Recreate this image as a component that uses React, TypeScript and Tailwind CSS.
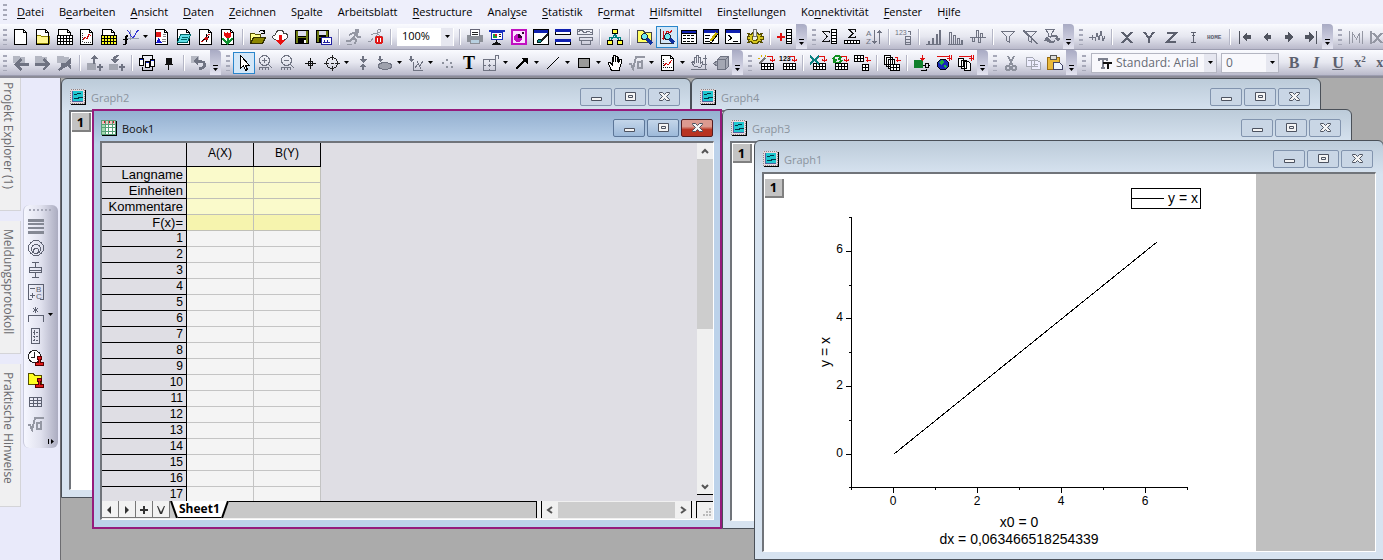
import type { ReactNode } from "react";
import clsx from "clsx";

const GREY = "#6f7382";

function Doc({ children, fill = "#fff" }: { children?: ReactNode; fill?: string }) {
  return (
    <>
      <path d="M1.5 .5h9l3 3v12h-12z" fill={fill} stroke="#000" />
      <path d="M10.5 .5v3h3" fill="none" stroke="#000" />
      {children}
    </>
  );
}

function Grid({ x, y, w, h, fill = "#fff", stroke = "#000" }: { x: number; y: number; w: number; h: number; fill?: string; stroke?: string }) {
  const cols = Math.floor(w / 3);
  const rows = Math.floor(h / 3);
  return (
    <g fill="none" stroke={stroke}>
      <rect x={x + 0.5} y={y + 0.5} width={w} height={h} fill={fill} />
      {Array.from({ length: cols }, (_, i) => (
        <path key={i} d={`M${x + 0.5 + i * 3} ${y}v${h + 1}`} />
      ))}
      {Array.from({ length: rows }, (_, i) => (
        <path key={i} d={`M${x} ${y + 0.5 + i * 3}h${w + 1}`} />
      ))}
    </g>
  );
}

const redArrow = <path d="M9 1.500h5.500v5M12.500 4.500l2 2 2-2M12 5.500h5" fill="none" stroke="#e01010" />;

const icons: Record<string, ReactNode> = {
  neu: <Doc />,
  ordner: (
    <Doc>
      <path d="M1.500 14.500v-8h4l1 1h8v7z" fill="#fff68f" stroke="#8c8200" />
      <path d="M1.500 4v11.500h12V4" fill="none" stroke="#000" />
    </Doc>
  ),
  arbeitsmappe: (
    <Doc>
      <Grid x={0} y={6} w={15} h={9} />
    </Doc>
  ),
  diagramm: (
    <Doc>
      <path d="M3.500 4v9h9" fill="none" stroke="#333" strokeDasharray="1 1" />
      <path d="M4 11l2-3 2 2 2-5 2 2" fill="none" stroke="#d01010" />
    </Doc>
  ),
  matrix: (
    <Doc>
      <Grid x={0} y={6} w={15} h={9} fill="#ffff20" />
    </Doc>
  ),
  funktion: (
    <>
      <path d="M7.500 1v10M3 9.500h13" stroke="#9aa0b0" />
      <path d="M4 1.500c3 0 3 7 5.500 7S13 2 15.500 1" fill="none" stroke="#3030d0" />
      <path d="M5 7c-2-1-2 1-2 2v5c0 1-1 2-3 1.500M0 10.500h5" fill="none" stroke="#000" strokeWidth="1.500" />
    </>
  ),
  layout: (
    <Doc>
      <path d="M2 3h5v5H2z" fill="#e01818" />
      <path d="M9 5.500h3M9 7.500h3M8 12.500h4M8 10.500h4" stroke="#888" />
      <path d="M2 14l2.500-5L8 14z" fill="#1818d0" />
    </Doc>
  ),
  notizen: (
    <Doc>
      <path d="M4.500 5.500h10l-3 8h-10z" fill="#60e0e8" stroke="#066" />
      <path d="M5.500 8.500h6M4.500 10.500h6" stroke="#066" />
    </Doc>
  ),
  digitalisieren: (
    <Doc>
      <path d="M3 13C7 12 7 6 12 5" fill="none" stroke="#d01010" />
      <path d="M4.500 11.500l7-4M8 5v8" stroke="#000" />
      <path d="M6.500 8h3v3h-3z" fill="#d01010" />
    </Doc>
  ),
  bild: (
    <Doc>
      <path d="M4 3l2 1.500L7.500 3 9 4.500 11 3v4L9 9H6L4 7z" fill="#e81010" />
      <path d="M7.500 9v5M2.500 9.500l5 5 5-5" fill="none" stroke="#109030" strokeWidth="2" />
    </Doc>
  ),
  oeffnen: (
    <>
      <path d="M.5 14.500v-10h4l1 1h5v3" fill="#ffff90" stroke="#555000" />
      <path d="M.5 14.500l3-6h12l-3 6z" fill="#8c8600" stroke="#333000" />
      <path d="M9 3c2-3 4-2 5 0m0-2v3h-3" fill="none" stroke="#000" />
    </>
  ),
  cloud: (
    <>
      <path d="M4 10.500C-.5 10.500 0 5.500 3.500 6 4 0 11 .5 11.500 4 17 4 16.500 10.500 12 10.500" fill="#fff" stroke="#444" />
      <path d="M7 6h3v5h3l-4.500 5L4 11h3z" fill="#e81010" />
    </>
  ),
  speichern: (
    <>
      <path d="M1 1h14v14H1z" />
      <path d="M2 2h2v12H2zM12 2h2v12h-2zM4 8h8v1H4z" fill="#6c7a10" />
      <path d="M4 2h8v5H4z" fill="#dde" />
      <path d="M10 11h2v3h-2z" fill="#fff" />
    </>
  ),
  speichernVorlage: (
    <>
      <path d="M0 1h13v13H0z" />
      <path d="M1 2h2v11H1zM10 2h2v11h-2zM3 8h7v1H3z" fill="#6c7a10" />
      <path d="M3 2h7v4H3z" fill="#dde" />
      <path d="M5.500 8.500h10v7h-10z" fill="#fff" stroke="#2020a0" />
      <path d="M7 13.500h7M8.500 11v2M11.500 11v2" stroke="#2020a0" />
    </>
  ),
  laufen: (
    <g fill="none" stroke="#9497a3" strokeWidth="2">
      <circle cx="11" cy="2" r="1.200" />
      <path d="M3 6l4-2 3 1-3 4 3 2-1 4M7 9l-3 3H0M10 5l2 3h3" />
      <path d="M1 15.500h5" strokeWidth="1" />
    </g>
  ),
  stopp: (
    <>
      <g fill="none" stroke="#9497a3">
        <circle cx="11" cy="2" r="1.500" />
        <path d="M3 6l4-2 3 1-3 4M5 9l-2 3H0M10 5l2 2h3" />
      </g>
      <circle cx="11" cy="11" r="4.500" fill="#e01818" />
      <path d="M9.500 9v4M12.500 9v4" stroke="#fff" />
    </>
  ),
  drucken: (
    <>
      <path d="M0 6h16v7H0z" fill="#8c9098" />
      <path d="M4 1h8v6H4zM3 10h10v5H3z" fill="#fff" />
      <path d="M3.500 7V.5h9V7" fill="none" stroke="#667" />
      <path d="M5 3.500h6M5 5.500h6" stroke="#222" />
      <path d="M3.500 10.500h9v4h-9z" fill="#b8d0e0" stroke="#8c9098" />
    </>
  ),
  praesentation: (
    <>
      <path d="M0 1h16v2H0z" fill="#1830c0" />
      <path d="M2.500 3.500h11v7h-11z" fill="#fff" stroke="#1830c0" />
      <circle cx="6" cy="7" r="2.500" fill="#18a040" />
      <path d="M6 4.500A2.500 2.500 0 018.500 7H6z" fill="#e02020" />
      <path d="M10 5.500h2M10 7.500h2" stroke="#222" />
      <path d="M7.500 11v2M4 15.500l3.500-3 3.500 3z" stroke="#111" fill="#111" />
    </>
  ),
  video: (
    <>
      <path d="M0 0h16v16H0z" fill="#c010c0" />
      <path d="M2 2h12v12H2z" fill="#fbe0ff" />
      <circle cx="7" cy="9" r="4" fill="#c010c0" />
      <path d="M7 9V5a4 4 0 014 4zM11 3h2v2h-2z" fill="#300030" />
    </>
  ),
  farbe: (
    <>
      <path d="M.5 .5h15v15H.5z" fill="#fff" stroke="#000" />
      <path d="M1 1h14v3H1z" fill="#1020b0" />
      <path d="M15 4L8 10l1 2 6-5z" fill="#222" />
      <path d="M4 14c0-3 2-4 4-3s0 3-4 3z" fill="#108888" stroke="#022" />
    </>
  ),
  teilen: (
    <>
      <path d="M.5 .5h15v5H.5zM.5 10.500h15v5H.5z" fill="#fff" stroke="#000" />
      <path d="M0 0h16v3H0zM0 10h16v3H0z" fill="#1020b0" />
    </>
  ),
  zusammen: (
    <g fill="none" stroke={GREY}>
      <path d="M.5 .5h15v5H.5zM2.500 8.500h13v3h-13zM4.500 11.500h9v4h-9zM1 3l3-2 4 3 3-2 4 2" />
    </g>
  ),
  hierarchie: (
    <>
      <path d="M8 5v3M2.500 11V8.500h11V11M8 5l-4 6M8 5l4 6" fill="none" stroke="#008080" />
      <path d="M5.500 .5h5v4h-5z" fill="#ffff40" stroke="#000" />
      <path d="M.5 11.500h5v4h-5zM10.500 11.500h5v4h-5z" fill="#ffff40" stroke="#000" />
    </>
  ),
  explorer: (
    <>
      <path d="M.5 13.500V1.500h6l1 2h7v10z" fill="#ffff60" stroke="#444" />
      <circle cx="7.500" cy="7.500" r="3" fill="#70e8f0" stroke="#223" />
      <path d="M10 10l5 5" stroke="#1030a0" strokeWidth="3" />
    </>
  ),
  objektmanager: (
    <>
      <path d="M1.500 0v14.500H15" fill="none" stroke="#333" />
      <path d="M4.500 2v9M3 10l3-3 2-5 3 2 2-3" fill="none" stroke="#d01010" />
      <circle cx="8.500" cy="7.500" r="3" fill="#70e8f0" stroke="#223" />
      <path d="M11 10l4 4" stroke="#1030a0" strokeWidth="3" />
    </>
  ),
  liste: (
    <>
      <path d="M0 1h16v14H0z" />
      <path d="M1 2h14v2H1z" fill="#1020b0" />
      <path d="M1 5h14v9H1z" fill="#fff" />
      <path d="M2 6.500h12M2 9.500h12M2 12.500h12" stroke="#000" strokeDasharray="3 1" />
    </>
  ),
  notiz: (
    <>
      <path d="M.5 .5h15v14H.5z" fill="#fff" stroke="#000" />
      <path d="M1 1h14v3H1z" fill="#1020b0" />
      <path d="M2 6.500h5M2 9.500h4M2 12.500h5" stroke="#000" />
      <path d="M14 4l-6 8" stroke="#c8b000" strokeWidth="3" />
      <path d="M15 5l-6 8H7" stroke="#000" fill="none" />
    </>
  ),
  befehl: (
    <>
      <path d="M.5 .5h15v14H.5z" fill="#fff" stroke="#000" />
      <path d="M1 1h14v3H1z" fill="#1020b0" />
      <path d="M3 6l4 3-4 3M8 12.500h5" fill="none" stroke="#000" />
    </>
  ),
  zahnrad: (
    <>
      <path d="M0 7.500h2l-1-3 3 1 2-2h4l2 2 3-1-1 3h2v3h-2l1 3-3-1-2 2H6l-2-2-3 1 1-3H0z" fill="#d8c820" stroke="#554c00" />
      <circle cx="8" cy="9" r="2.500" fill="#eee" stroke="#665c00" />
      <path d="M6.500 .5h3v7h-3z" fill="#eee" stroke="#777" />
    </>
  ),
  spalteNeu: (
    <>
      <path d="M0 8h8M4 4v8" stroke="#e01010" strokeWidth="2" />
      <path d="M9.500 .5h5v14h-5zM9 3.500h6M9 6.500h6M9 9.500h6M9 12.500h6" fill="#fff" stroke="#000" />
    </>
  ),
  summeSpalte: (
    <>
      <path d="M7 4V2.500H1l4 5-4 5h6V11" fill="none" stroke="#111" />
      <path d="M9.500 .5h5v14h-5zM9 3.500h6M9 6.500h6M9 9.500h6M9 12.500h6" fill="#fff" stroke="#000" />
    </>
  ),
  summeZeile: (
    <>
      <path d="M11 3V.5H5l4 4-4 4h6.500V7" fill="none" stroke="#111" />
      <path d="M.5 11.500h15v3H.5zM3.500 11v4M6.500 11v4M9.500 11v4M12.500 11v4" fill="#fff" stroke="#000" />
    </>
  ),
  sortieren: (
    <g stroke={GREY} fill="none">
      <text x="0" y="7" fontSize="8" stroke="none" fill={GREY}>A</text>
      <text x="0" y="15" fontSize="8" stroke="none" fill={GREY}>Z</text>
      <path d="M8.500 1v13M6.500 12l2 2 2-2M13.500 15V2M11.500 4l2-2 2 2" />
    </g>
  ),
  werte: (
    <g stroke={GREY} fill="none">
      <text x="-1" y="6" fontSize="7" stroke="none" fill={GREY}>123</text>
      <path d="M12 2.500h2v3M9.500 7.500h5v8h-5zM9 10.500h6M9 13.500h6" />
    </g>
  ),
  balken1: <path d="M0 15.500h15M2.500 15v-3h1v3M6.500 15V9h1v6M10.500 15V5h1v10M13.500 15V1h1v14" fill="none" stroke={GREY} />,
  balken2: <path d="M0 15.500h15M1.500 15V3h2v12M5.500 15V6h2v9M9.500 15V9h2v6M13.500 15v-4h1v4" fill="none" stroke={GREY} />,
  balken3: <path d="M0 8.500h16M2.500 8v4h2V8M6.500 8V1h2v12h2V4h2v4" fill="none" stroke={GREY} />,
  filter: <path d="M1.500 2.500h13l-5 5v6l-3-2v-4z" fill="none" stroke={GREY} />,
  filterAus: <path d="M1.500 2.500h13l-5 5v6l-3-2v-4zM1 1l14 14M2 1l14 14" fill="none" stroke={GREY} />,
  filterNeu: (
    <g fill="none" stroke={GREY}>
      <path d="M1.500 .5h9l-3 4v3h-3v-3z" />
      <path d="M3 9c0 4 4 5 8 3M14 10c-1-4-5-4-8-2" strokeWidth="2" />
      <path d="M1 11l2-3 3 3zM11 9h5l-2 3z" fill={GREY} />
    </g>
  ),
  welle: <path d="M0 8.500h6M3.500 6v5M6 12l2-8 2 7 2-9 2 10 2-5" fill="none" stroke={GREY} />,
  xAchse: <path d="M3 3l10 11M13 3L3 14" fill="none" stroke="#5c606e" strokeWidth="2" />,
  yAchse: <path d="M3 3l5 6 5-6M8 8v6" fill="none" stroke="#5c606e" strokeWidth="2" />,
  zAchse: <path d="M4 4h9L4 13h9" fill="none" stroke="#5c606e" strokeWidth="2" />,
  fehler: <path d="M8.500 3v10M6 3.500h5M6 13.500h5M7 6.500h3" fill="none" stroke="#5c606e" />,
  home: <text x="0" y="10" fontSize="6" fontWeight="bold" fontFamily="Liberation Mono, monospace" fill="#5c606e">HOME</text>,
  erster: <path d="M2 2h1v13H2zM5 8l5-5v3h4v4h-4v3z" fill="#50545f" />,
  zurueck: <path d="M4 8l5-5v3h3v4H9v3z" fill="#50545f" />,
  weiter: <path d="M12 8L7 3v3H4v4h3v3z" fill="#50545f" />,
  letzter: <path d="M13 2h1v13h-1zM11 8L6 3v3H2v4h4v3z" fill="#50545f" />,
  maske: <path d="M1.500 2v13M14.500 2v13M4.500 14V4l4 6 3-6v10" fill="none" stroke="#9497a3" />,
  maskeX: <path d="M.5 2v13M3 4l9 10M12 4L3 14" fill="none" stroke="#9497a3" strokeWidth="2" />,

  links: (
    <>
      <path d="M0 1h6l1 1h5v6H0z" fill="#b4b7c2" />
      <path d="M1 9l6-6 2 2-3 3h10v3H6l3 3-2 2z" fill={GREY} />
    </>
  ),
  rechts: (
    <>
      <path d="M0 1h6l1 1h5v6H0z" fill="#b4b7c2" />
      <path d="M15 9L9 3 7 5l3 3H0v3h10l-3 3 2 2z" fill={GREY} />
    </>
  ),
  hoch: (
    <>
      <path d="M0 1h6l1 1h5v6H0z" fill="#b4b7c2" />
      <path d="M4 8h6V6h4v3L4 15H0l4-4zM9 10h5v5z" fill={GREY} />
      <path d="M14 4L2 15" stroke={GREY} strokeWidth="2" />
    </>
  ),
  ordnerPlus: (
    <>
      <path d="M0 8h9v7H0z" fill="#a4a7b2" />
      <path d="M3 4l4-4 4 4H8v5H6V4zM12 9h2v2h2v2h-2v3h-2v-3h-2v-2h2z" fill={GREY} />
    </>
  ),
  ordnerMinus: (
    <>
      <path d="M0 9h9v6H0z" fill="#a4a7b2" />
      <path d="M10 0C5 0 4 2 4 4H2l4 5 4-5H7c0-2 1-3 3-3zM12 9h2v2h2v2h-2v3h-2v-3h-2v-2h2z" fill={GREY} />
    </>
  ),
  fenster: (
    <g fill="#fff" stroke="#000">
      <path d="M3 3V.5h10V4M3 12v3.500h10V12" fill="none" />
      <path d="M.5 3.500h4v7h-4zM6.500 6.500h4v6h-4zM11.500 4.500h4v7h-4z" />
      <path d="M1 4.500h3M7 7.500h3M12 5.500h3" stroke="#1020b0" />
    </g>
  ),
  pin: <path d="M5 3h6v6H5zM4 9h8v1H4zM7 10h1v5H7z" fill="#111" />,
  rueckgaengig: (
    <>
      <path d="M0 1h8v7H0z" fill="#b4b7c2" />
      <path d="M2 6l5-4v3h3c7 0 7 9 0 10H8v-3h2c3-1 3-4 0-4H7v3z" fill={GREY} />
    </>
  ),
  zeiger: <path d="M4.500 .5v13l3-3 2 5 2-1-2-4h4z" fill="#fff" stroke="#000" />,
  zoomPlus: (
    <g fill="none" stroke={GREY}>
      <circle cx="6.500" cy="5.500" r="5" />
      <path d="M4 5.500h5M6.500 3v5M10 9l4 4M1 15v-2.500h9V15M4.500 13v2M7.500 13v2" />
    </g>
  ),
  zoomMinus: (
    <g fill="none" stroke={GREY}>
      <circle cx="6.500" cy="5.500" r="5" />
      <path d="M4 5.500h5M10 9l4 4M1 15v-2.500h9V15M4.500 13v2M7.500 13v2" />
    </g>
  ),
  kreuz: <path d="M8.500 3v11M3 8.500h11M6.500 6.500h4v4h-4z" fill="none" stroke="#111" />,
  ziel: (
    <g fill="none" stroke="#222">
      <circle cx="8" cy="8" r="5.500" />
      <path d="M8.500 0v5M8.500 11v5M0 8.500h5M11 8.500h5M7 8.500h3" />
    </g>
  ),
  auswahl: <path d="M7 1h2v3h3L8 8 4 4h3zM7 15h2v-3h3L8 9l-4 3h3z" fill={GREY} />,
  region: (
    <>
      <path d="M2 1h2v3h2L3 7 0 4h2z" fill={GREY} />
      <ellipse cx="8" cy="11" rx="7" ry="3.500" fill="#9ea1ad" stroke={GREY} />
    </>
  ),
  maskieren: (
    <>
      <path d="M2 1h2v3h2L3 7 0 4h2z" fill={GREY} />
      <path d="M5.500 7v8.500H15M7 13l3-4 2 2 3-5M9 6l4 8" fill="none" stroke={GREY} />
    </>
  ),
  punkte: <path d="M3 7h2v2H3zM7 4h2v2H7zM11 7h2v2h-2zM7 11h2v2H7zM12 11h2v2h-2z" fill="#8c909c" />,
  text: <text x="2" y="14" fontSize="18" fontWeight="bold" fontFamily="Liberation Serif, serif">T</text>,
  tabelleText: <path d="M.5 4.500h12v11H.5zM0 10.500h3m2 0h3m2 0h3M6.500 4v3m0 2v3m0 2v2M12.500 4V.5h3V4" fill="none" stroke={GREY} />,
  pfeil: (
    <>
      <path d="M2 14l9-9" stroke="#000" strokeWidth="2" />
      <path d="M7 3h7v7z" />
    </>
  ),
  linie: <path d="M2 14L14 2" stroke="#000" />,
  rechteck: <path d="M2.500 3.500h11v9h-11z" fill="#9a9a9a" stroke="#000" />,
  hand: <path d="M4.500 15.500L1.500 9V7.500h1.500l2 2v-7h1.500v4-6H8v6-5h2v5-4h1.500v5l1.500-3h1V9l-2 6.500z" fill="#fff" stroke="#000" />,
  formel: (
    <g fill="none" stroke="#9497a3" strokeWidth="2">
      <path d="M0 9h2l2 5 3-12h9M13 5v9M13 7H9v6h4" />
    </g>
  ),
  diagrammNeu: (
    <Doc>
      <path d="M3.500 4v8.500H12" fill="none" stroke="#111" strokeDasharray="1 1" />
      <path d="M4 11l2-3 2 2 4-5" fill="none" stroke="#d01010" />
    </Doc>
  ),
  handAchse: <path d="M3.500 11.500l-3-4 2-1 1 2v-6h2v-2h2v2h2v6l2-2v3l-2 3zM14.500 0v15M0 14.500h16M12 3.500h4M12 9.500h4M5.500 3v5M7.500 3v5" fill="none" stroke={GREY} />,
  wuerfel: (
    <g fill="#a4a7b3" stroke={GREY}>
      <path d="M4.500 4.500l3-3h8v10l-3 3h-8zM4.500 4.500h8v10M12.500 4.500l3-3" />
      <path d="M4 6L.5 8.500 4 11z" />
    </g>
  ),
  assistent: (
    <>
      <path d="M1 9l6-6" stroke="#777" strokeWidth="2" />
      <path d="M0 3l2 1M3 0l1 2M8 0L7 2" stroke="#d8b000" />
      {redArrow}
      <Grid x={3} y={8} w={12} h={6} />
    </>
  ),
  ascii: (
    <>
      <text x="-1" y="6" fontSize="7" fontWeight="bold">123</text>
      {redArrow}
      <Grid x={3} y={8} w={12} h={6} />
    </>
  ),
  excel: (
    <>
      <Grid x={3} y={8} w={12} h={6} />
      <path d="M0 1l9 8M9 1L0 9" stroke="#088080" strokeWidth="2" />
      {redArrow}
    </>
  ),
  aktualisieren: (
    <>
      <path d="M1 4c2-4 6-4 8-1M10 5c-2 4-6 4-8 1M8 1v3H6M2 8V5h3" fill="none" stroke="#109020" strokeWidth="2" />
      {redArrow}
      <Grid x={3} y={8} w={12} h={6} />
    </>
  ),
  verschieben: (
    <>
      <Grid x={0} y={0} w={9} h={6} />
      <path d="M11 2.500h2.500v4M11.500 5.500h5" fill="none" stroke="#e01010" />
      <Grid x={8} y={9} w={6} h={6} />
    </>
  ),
  stapel: (
    <>
      <path d="M.5 .5h6v9h-6zM2.500 2.500h6v9h-6zM4.500 4.500h6v9h-6z" fill="#fff" stroke="#000" />
      <path d="M11 2.500h2.500v4M11.500 5.500h5" fill="none" stroke="#e01010" />
      <Grid x={6} y={9} w={9} h={6} />
    </>
  ),
  verbinden: (
    <>
      <path d="M0 5h9v8H0z" fill="#10802c" />
      <path d="M8.500 0v5M6.500 3l2 2 2-2" stroke="#e01010" fill="none" />
      <path d="M9 10.500h2M11.500 8.500h3v4h-3zM14 10.500h2M7 15.500h5v-2" stroke="#000" fill="none" />
    </>
  ),
  web: (
    <>
      <circle cx="7" cy="9.500" r="5.500" fill="#1828b8" stroke="#001" />
      <path d="M3 7l3-2 2 2-2 3-2-1zM8 10l3 1-2 3z" fill="#20b040" />
      <path d="M1 1.500h12M13.500 0v6M15.500 0v5M11 3.500h5" stroke="#e01010" fill="none" />
    </>
  ),
  dateien: (
    <>
      <path d="M.5 3.500h5v8h-5zM3.500 5.500h5v8h-5zM6.500 6.500h4l2 2v7h-6z" fill="#fff" stroke="#000" />
      <path d="M1 1.500h12M13.500 0v6M15.500 0v5M11 3.500h5" stroke="#e01010" fill="none" />
    </>
  ),
  ausschneiden: (
    <g fill="none" stroke="#8c909c" strokeWidth="2">
      <path d="M5 1l5 10M11 1L6 11" />
      <circle cx="5" cy="13" r="2" />
      <circle cx="11" cy="13" r="2" />
    </g>
  ),
  kopieren: (
    <g fill="#eef" stroke="#a4a7b2">
      <path d="M1.500 2.500h6l2 2v7h-8zM6.500 5.500h6l3 2v7h-9zM8 9.500h5M8 11.500h5M3 5.500h3" />
    </g>
  ),
  einfuegen: (
    <>
      <path d="M.5 2.500h12v12H.5z" fill="#e8b83c" stroke="#9a6c10" />
      <path d="M3.500 .5h6v4h-6z" fill="#ddd" stroke="#555" />
      <path d="M6.500 7.500h6l3 3v4h-9z" fill="#eef4ff" stroke="#446" />
    </>
  ),
  spalten: <path d="M0 1h16v3H0zM0 5h16v2H0zM0 9h16v2H0zM0 13h16v3H0z" fill="#848894" />,
  kreise: (
    <g fill="none" stroke="#5c6070">
      <circle cx="8" cy="8" r="7.500" />
      <circle cx="8" cy="9" r="4.500" />
      <circle cx="8" cy="11" r="2.500" />
    </g>
  ),
  box: <path d="M7.500 0v5M7.500 11v5M4 .5h7M4 15.500h7M1.500 5.500h12v5h-12zM1 8.500h13" fill="none" stroke="#5c6070" />,
  ersetzen: (
    <g fill="none" stroke="#5c6070">
      <path d="M4 15.500H.5V.5h15v15H12M2 4.500h5M2 11.500h5M4.500 9v5" />
      <text x="8" y="8" fontSize="8" stroke="none" fill="#5c6070">B</text>
      <text x="8" y="15" fontSize="8" stroke="none" fill="#5c6070">C</text>
    </g>
  ),
  klammer: <path d="M.5 16V9.500h15V16M7.500 1v6M5 2l5 4M10 2L5 6" fill="none" stroke="#5c6070" />,
  vergleich: (
    <g fill="none" stroke="#5c6070">
      <path d="M3.500 .5h8v15h-8z" />
      <path d="M6.500 2v12M5 4.500h2M8 4.500h2M5 8.500h2M8 8.500h2M5 12.500h2M8 12.500h2" strokeDasharray="2 1" />
    </g>
  ),
  uhrStempel: (
    <>
      <circle cx="6.500" cy="6.500" r="6" fill="#fff" stroke="#222" />
      <path d="M6.500 2v5H3" fill="none" stroke="#222" />
      <path d="M9 6h4v3h-1v3h3v3H7v-3h3V9H9z" fill="#e01818" stroke="#500" />
    </>
  ),
  ordnerStempel: (
    <>
      <path d="M.5 12.500V1.500h5l1 2h7v9z" fill="#ffff20" stroke="#555000" />
      <path d="M9 6h4v3h-1v3h3v3H7v-3h3V9H9z" fill="#e01818" stroke="#500" />
    </>
  ),
  tabelle: <path d="M1.500 3.500h12v9h-12zM1 6.500h13M1 9.500h13M5.500 3v10M9.500 3v10" fill="none" stroke="#5c6070" />,
};

function Icon({ name }: { name: string }) {
  return (
    <svg viewBox="0 0 16 16" className="size-4 overflow-visible" shapeRendering="crispEdges" fontFamily="Liberation Sans, sans-serif" aria-hidden="true">
      {icons[name]}
    </svg>
  );
}

// "|" separator, ">" drop-down arrow of the tool before it, "!" marks the selected tool
const standardTools = [
  "neu", "ordner", "arbeitsmappe", "diagramm", "matrix", "funktion", ">", "layout", "notizen", "digitalisieren", "bild", "|",
  "oeffnen", "cloud", "speichern", "speichernVorlage", "|", "laufen", "stopp", "|",
];
const viewTools = [
  "|", "drucken", "praesentation", "video", "farbe", "teilen", "zusammen", "|", "hierarchie", "|",
  "explorer", "!objektmanager", "liste", "notiz", "befehl", "zahnrad", "|", "spalteNeu",
];
const columnTools = [
  "summeSpalte", "summeZeile", "sortieren", "|", "werte", "|", "balken1", "balken2", "balken3", "|",
  "filter", "filterAus", "filterNeu",
];
const axisTools = ["welle", "|", "xAchse", "yAchse", "zAchse", "fehler", "home", "|", "erster", "zurueck", "weiter", "letzter"];
const projectTools = ["links", "rechts", "hoch", "|", "ordnerPlus", "ordnerMinus", "|", "fenster", "pin", "|", "rueckgaengig"];
const drawTools = [
  "!zeiger", "zoomPlus", "zoomMinus", "kreuz", "ziel", ">", "auswahl", "region", ">", "maskieren", ">", "punkte", "text",
  "tabelleText", ">", "pfeil", ">", "linie", ">", "rechteck", ">", "hand", "formel", ">", "diagrammNeu", ">", "handAchse", "wuerfel",
];
const importTools = [
  "assistent", "ascii", "|", "excel", "aktualisieren", "verschieben", "|", "stapel", "|", "verbinden", "web", "dateien",
];
const sideTools = [
  "spalten", "kreise", "box", "ersetzen", "klammer", "vergleich", "uhrStempel", "ordnerStempel", "tabelle", "formel",
];

function Tools({ items }: { items: string[] }) {
  return items.map((item, i) => {
    if (item === "|") return <span key={i} className="mx-[3px] h-4 w-[2px] shrink-0 border-l border-[#b4b6c6] bg-white" />;
    if (item === ">")
      return (
        <button key={i} type="button" aria-label="Optionen" className="flex h-6 w-[9px] shrink-0 items-center pl-px">
          <svg viewBox="0 0 5 3" className="h-[3px] w-[5px]"><path d="M0 0h5L2.500 3z" /></svg>
        </button>
      );
    const selected = item.startsWith("!");
    const name = selected ? item.slice(1) : item;
    return (
      <button
        key={i}
        type="button"
        aria-label={name}
        className={clsx("flex h-[22px] w-[22px] shrink-0 items-center justify-center", selected && "border border-[#2a86cc] bg-[#d3e7f8]")}
      >
        <Icon name={name} />
      </button>
    );
  });
}

function Grip() {
  return <span className="mx-[3px] h-4 w-1 shrink-0 bg-[repeating-linear-gradient(#a6a8b8_0_2px,transparent_2px_5px)]" />;
}

function Overflow() {
  return (
    <button type="button" aria-label="Weitere Schaltflächen" className="mr-[2px] flex w-[11px] shrink-0 items-end justify-center self-stretch rounded-tr-sm bg-linear-to-b from-[#a9abc4] to-[#e4e4f0] pb-1">
      <svg viewBox="0 0 5 6" className="h-[6px] w-[5px]"><path d="M0 0h5v1H0zM0 3h5L2.500 6z" /></svg>
    </button>
  );
}

function Toolbar({ children }: { children: ReactNode }) {
  return (
    <div className="flex h-[26px] items-center overflow-hidden border-b border-[#9c9db0] bg-linear-to-b from-[#fafbff] via-[#e6e7f0] to-[#babacb]">
      {children}
    </div>
  );
}

const menu = [
  ["", "D", "atei"], ["B", "e", "arbeiten"], ["", "A", "nsicht"], ["", "D", "aten"], ["", "Z", "eichnen"], ["S", "p", "alte"],
  ["Arbeitsblatt", "", ""], ["", "R", "estructure"], ["Anal", "y", "se"], ["", "S", "tatistik"], ["F", "o", "rmat"],
  ["", "H", "ilfsmittel"], ["Ein", "s", "tellungen"], ["Ko", "n", "nektivität"], ["", "F", "enster"], ["H", "i", "lfe"],
];

function WindowIcon({ book }: { book?: boolean }) {
  return (
    <svg viewBox="0 0 16 16" className="size-4" shapeRendering="crispEdges" aria-hidden="true">
      {book ? (
        <>
          <path d="M1 1h15v15H1z" />
          <path d="M0 0h15v15H0z" fill="#fff" />
          <path d="M0 0h15v4H0z" fill="#f4c0c0" />
          <path d="M0 4h5v11H0z" fill="#a4dcb0" />
          <path d="M.5 .5h14v14H.5zM4.500 0v15M7.500 0v15M11.500 0v15M0 4.500h15M0 7.500h15M0 11.500h15" fill="none" stroke="#58a078" />
          <path d="M3 1v2M8 1v2M12 1v2" stroke="#c02020" />
        </>
      ) : (
        <>
          <path d="M1 1h15v15H1z" />
          <path d="M0 0h15v15H0z" fill="#e8d8dc" />
          <path d="M.5 .5h14v14H.5z" fill="none" stroke="#888" strokeDasharray="1 1" />
          <path d="M3 2h10v10H3z" fill="#20c8d0" />
          <path d="M4 5.500h2l2-1h3M4 9.500h3l3-1h3" fill="none" stroke="#034" />
          <path d="M2.500 2v10.500H13" fill="none" stroke="#5060a0" />
        </>
      )}
    </svg>
  );
}

const captionGlyphs = [
  { label: "Minimieren", d: "M11.500 9.500h10v3h-10z" },
  { label: "Maximieren", d: "M11.500 4.500h10v8h-10zM14.500 7.500h4v2h-4z" },
  { label: "Schließen", d: "M11.500 4.500h3l2 2 2-2h3v1l-3 3 3 3v1h-3l-2-2-2 2h-3v-1l3-3-3-3z" },
];

type WindowProps = {
  title: string;
  className: string;
  active?: boolean;
  children: ReactNode;
};

function MdiWindow({ title, className, active = false, children }: WindowProps) {
  return (
    <section
      className={clsx(
        "absolute flex h-[420px] w-[630px] flex-col pb-[7px]",
        active
          ? "border-2 border-[#951b7c] bg-linear-to-b from-[#94b0d0] from-0% via-[#bcd2ea] via-8% to-[#bcd2ea] px-[6px]"
          : "rounded-t-md border border-[#4a5058] bg-linear-to-b from-[#bccbd9] from-0% via-[#d7e3f0] via-8% to-[#d7e3f0] px-[7px]",
        className,
      )}
    >
      <header className={clsx("flex shrink-0 items-center gap-[5px] pl-px", active ? "h-[30px] pt-[4px] pr-px" : "h-[31px] pt-[5px] pr-[3px]")}>
        <WindowIcon book={active} />
        <h2 className={clsx("grow pt-[2px] text-[11px]", active ? "text-[#111]" : "text-[#8b949e]")}>{title}</h2>
        <div className="flex gap-[2px]">
          {captionGlyphs.map(({ label, d }, i) => (
            <button
              key={label}
              type="button"
              aria-label={label}
              className={clsx(
                "h-[18px] w-8 rounded-[2px] border",
                !active && "border-[#8294ae] bg-[#c9d6e5]",
                active && i < 2 && "border-[#5c7698] bg-linear-to-b from-[#c4d6ea] to-[#9db9d9]",
                active && i === 2 && "border-[#541c20] bg-linear-to-b from-[#dc9a90] from-40% to-[#b83422] to-60%",
              )}
            >
              <svg viewBox="1 1 30 16" className="h-4 w-[30px]" aria-hidden="true">
                <path d={d} fill="#f4f4f4" stroke="#4c5260" />
              </svg>
            </button>
          ))}
        </div>
      </header>
      <div className="flex min-h-0 grow flex-col border-b border-r border-l-2 border-t-2 border-b-white border-l-[#70747a] border-r-white border-t-[#70747a] bg-white">
        {children}
      </div>
    </section>
  );
}

function PageButton() {
  return (
    <button type="button" className="m-[1px] size-[19px] shrink-0 border-b-2 border-r-2 border-[#808080] bg-[#c3c3c3] text-[13px] leading-4 font-bold">
      1
    </button>
  );
}

const ticks = [0, 2, 4, 6];

function Plot() {
  return (
    <svg viewBox="0 0 492 376" className="h-[376px] w-[492px]" fontFamily="Liberation Sans, sans-serif" fontSize="12" role="img" aria-label="y = x">
      <g fill="none" stroke="#000" shapeRendering="crispEdges">
        <path d="M87.500 43v271M85 313.500h339" />
        {[-1, 1, 3, 5, 7].map((t) => (
          <g key={t}>
            <path d={`M${129.500 + t * 42} 313v3`} />
            <path d={`M85 ${Math.round(279.500 - t * 33.800) + 0.5}h3`} />
          </g>
        ))}
        {ticks.map((t) => (
          <g key={t}>
            <path d={`M${129.500 + t * 42} 313v6`} />
            <path d={`M82 ${Math.round(279.500 - t * 33.800) + 0.5}h6`} />
          </g>
        ))}
        <path d="M130 280L393 68" />
        <path d="M367.500 14.500h69v20h-69zM368 24.500h32" />
      </g>
      {ticks.map((t) => (
        <g key={t}>
          <text x={129 + t * 42} y="331" textAnchor="middle">{t}</text>
          <text x="79" y={283 - t * 34} textAnchor="end">{t}</text>
        </g>
      ))}
      <g fontSize="14">
        <text x="404" y="29">y = x</text>
        <text x="255" y="353" textAnchor="middle">x0 = 0</text>
        <text x="255" y="370" textAnchor="middle">dx = 0,063466518254339</text>
        <text transform="translate(66 178) rotate(-90)" textAnchor="middle">y = x</text>
      </g>
    </svg>
  );
}

const propertyRows = ["Langname", "Einheiten", "Kommentare", "F(x)="];

function Sheet() {
  return (
    <table className="w-[219px] table-fixed border-separate border-spacing-0 font-['Liberation_Sans',Arial,sans-serif] text-[12px]">
      <thead>
        <tr className="h-6">
          <th className="w-[85px] border-b border-r border-black bg-[#dfdee4]" aria-label="Zeile" />
          <th className="w-[67px] border-b border-r border-black pb-[3px] font-normal">A(X)</th>
          <th className="w-[67px] border-b border-r border-black pb-[3px] font-normal">B(Y)</th>
        </tr>
      </thead>
      <tbody>
        {propertyRows.map((name) => (
          <tr key={name} className="h-4 text-[13px] leading-[15px]">
            <th className="border-b border-r border-black pr-[3px] text-right font-normal">{name}</th>
            <td className={clsx("border-b border-r border-[#c0c0b8]", name === "F(x)=" ? "bg-[#f6f4ae]" : "bg-[#fafacb]")} />
            <td className={clsx("border-b border-r border-[#c0c0b8]", name === "F(x)=" ? "bg-[#f6f4ae]" : "bg-[#fafacb]")} />
          </tr>
        ))}
        {Array.from({ length: 17 }, (_, i) => (
          <tr key={i} className="h-4 leading-[15px]">
            <th className="border-b border-r border-black pr-[3px] text-right font-normal">{i + 1}</th>
            <td className="border-b border-r border-[#c4c4c4] bg-[#f4f4f4]" />
            <td className="border-b border-r border-[#c4c4c4] bg-[#f4f4f4]" />
          </tr>
        ))}
      </tbody>
    </table>
  );
}

function Chevron({ d, label }: { d: string; label: string }) {
  return (
    <button type="button" aria-label={label} className="flex size-4 shrink-0 items-center justify-center bg-[#f0f0f0]">
      <svg viewBox="0 0 10 10" className="size-[10px]"><path d={d} fill="none" stroke="#555" strokeWidth="2" /></svg>
    </button>
  );
}

function BookWindow() {
  return (
    <MdiWindow title="Book1" active className="left-[31px] top-[31px]">
      <div className="flex min-h-0 grow bg-[#dfdee4]">
        <div className="grow">
          <Sheet />
        </div>
        <div className="mb-[6px] flex w-4 flex-col border-b border-black bg-[#f0f0f0]">
          <Chevron label="Nach oben" d="M2 7l3-3 3 3" />
          <div className="h-[170px] bg-[#cdcdcd]" />
          <div className="grow" />
          <Chevron label="Nach unten" d="M2 4l3 3 3-3" />
        </div>
      </div>
      <div className="flex h-[18px] shrink-0 bg-[#f0f0f0]">
        {[
          ["Zurück", "M9 5v8L5 9z"],
          ["Vor", "M6 5v8l4-4z"],
          ["Hinzufügen", "M7 5h2v3h3v2H9v3H7v-3H4V8h3z"],
          ["Liste", "M4 5h1l3 6 3-6h1l-3 8H7z"],
        ].map(([label, d]) => (
          <button key={label} type="button" aria-label={label} className="h-[17px] w-[17px] border-b border-r border-[#777] bg-[#f2f2f2]">
            <svg viewBox="0 0 16 16" className="size-4"><path d={d} fill="#333" /></svg>
          </button>
        ))}
        <div className="flex h-[17px] grow border-r border-black bg-[#c8c8c8]">
          <svg viewBox="0 0 8 17" className="h-[17px] w-2"><path d="M1 0h7v17z" fill="#fff" /><path d="M1 0l6 17" stroke="#000" strokeWidth="2" /></svg>
          <button type="button" className="border-b border-black bg-white px-[1px] text-[12px] leading-4 font-bold">Sheet1</button>
          <svg viewBox="0 0 8 17" className="h-[17px] w-2"><path d="M0 0h7L1 17H0z" fill="#fff" /><path d="M7 0L1 17" stroke="#000" strokeWidth="2" /></svg>
          <div className="grow border-t border-black" />
        </div>
        <div className="ml-1 flex h-[17px] w-[151px] items-center border-x border-black bg-[#f0f0f0]">
          <Chevron label="Nach links" d="M7 2L3 5l4 3" />
          <div className="h-4 grow bg-[#cdcdcd]" />
          <Chevron label="Nach rechts" d="M3 2l4 3-4 3" />
        </div>
        <div className="ml-1 h-[17px] w-[17px] border-l border-t border-black">
          <svg viewBox="0 0 16 16" className="size-4"><path d="M12 6h2v2h-2zM9 9h2v2H9zM12 9h2v2h-2zM6 12h2v2H6zM9 12h2v2H9zM12 12h2v2h-2z" fill="#bbb" /></svg>
        </div>
      </div>
    </MdiWindow>
  );
}

function SelectArrow() {
  return (
    <span className="pointer-events-none flex w-3 shrink-0 items-center justify-center self-stretch bg-[#e6e7f0]">
      <svg viewBox="0 0 5 3" className="h-[3px] w-[5px]"><path d="M0 0h5L2.500 3z" /></svg>
    </span>
  );
}

const dockTabs = [
  { title: "Projekt Explorer (1)", height: "h-[133px] pt-[4px]" },
  { title: "Meldungsprotokoll", height: "h-[133px] pt-2" },
  { title: "Praktische Hinweise", height: "h-[143px] pt-2" },
];

export default function App() {
  return (
    <div className="flex h-screen flex-col overflow-hidden bg-[#e9eafa] font-['Open_Sans','Noto_Sans',sans-serif] text-black">
      <nav className="flex h-6 shrink-0 items-center bg-[#eeeffb] text-[11px]">
        <Grip />
        <div className="flex gap-[15px] pl-[7px]">
          {menu.map(([before, key, after]) => (
            <button key={before + key + after} type="button" className="whitespace-nowrap">
              {before}
              <span className="underline underline-offset-2">{key}</span>
              {after}
            </button>
          ))}
        </div>
      </nav>

      <div className="shrink-0 border-b-2 border-[#8c8c98]">
        <Toolbar>
          <Grip />
          <Tools items={standardTools} />
          <div className="mx-[2px] flex h-[18px] w-[57px] shrink-0 items-center bg-white pr-px">
            <select aria-label="Zoom" className="h-[18px] min-w-0 grow appearance-none pl-[5px] text-[11px]">
              <option>100%</option>
            </select>
            <SelectArrow />
          </div>
          <Tools items={viewTools} />
          <Overflow />
          <Grip />
          <Tools items={columnTools} />
          <Overflow />
          <Grip />
          <Tools items={axisTools} />
          <Overflow />
          <Grip />
          <Tools items={["maske", "maskeX"]} />
        </Toolbar>
        <Toolbar>
          <Grip />
          <Tools items={projectTools} />
          <Overflow />
          <Grip />
          <Tools items={drawTools} />
          <Overflow />
          <Grip />
          <Tools items={importTools} />
          <Overflow />
          <Grip />
          <Tools items={["ausschneiden", "kopieren", "einfuegen"]} />
          <Overflow />
          <Grip />
          <div className="mx-[2px] flex h-5 w-[126px] shrink-0 items-center border border-[#b4b6c2] bg-[#f8f8fc] pl-[6px]">
            <svg viewBox="0 0 14 14" className="h-[14px] w-[14px] shrink-0" shapeRendering="crispEdges" aria-hidden="true">
              <path d="M.5 5V2.500h8V5M4.500 2v9M3 11.500h4" fill="none" stroke="#7c808e" strokeWidth="2" />
              <path d="M5.500 8V6.500h7V8M9.500 6v7" fill="none" stroke="#111" strokeWidth="2" />
            </svg>
            <select aria-label="Schriftart" className="h-[18px] min-w-0 grow appearance-none pl-[4px] text-[12px] text-[#666a74]">
              <option>Standard: Arial</option>
            </select>
            <SelectArrow />
          </div>
          <div className="mx-[2px] flex h-5 w-[58px] shrink-0 items-center border border-[#b4b6c2] bg-[#f8f8fc]">
            <select aria-label="Schriftgrad" className="h-[18px] min-w-0 grow appearance-none pl-1 text-[12px] text-[#666a74]">
              <option>0</option>
            </select>
            <SelectArrow />
          </div>
          <div className="flex shrink-0 pl-[2px] font-['Liberation_Serif',serif] text-[16px] leading-5 font-bold text-[#5c606e]">
            <button type="button" className="w-[22px]">B</button>
            <button type="button" className="w-[22px] italic">I</button>
            <button type="button" className="w-[22px] underline">U</button>
            <button type="button" className="flex w-[22px] justify-center text-[14px]">x<span className="text-[9px] leading-3">2</span></button>
            <button type="button" className="flex w-[22px] items-end justify-center text-[14px]">x<span className="text-[9px] leading-3">2</span></button>
          </div>
        </Toolbar>
      </div>

      <div className="flex min-h-0 grow">
        <aside className="flex w-[60px] shrink-0 items-start">
          <div className="flex w-[21px] flex-col gap-[10px] text-[12px] text-[#6a6a6e]">
            {dockTabs.map(({ title, height }) => (
              <button
                key={title}
                type="button"
                className={clsx("flex w-[21px] items-center border-b border-r border-[#d4d4d8] bg-[#f0f0f1] pr-[4px] [writing-mode:vertical-rl] leading-4 whitespace-nowrap", height)}
              >
                {title}
              </button>
            ))}
          </div>
          <div className="mt-[127px] ml-[2px] flex w-[35px] flex-col rounded-md border-l border-[#c8cadb] bg-linear-to-r from-[#f6f7ff] via-[#e0e1ee] to-[#abacc0] pl-px">
            <span className="mx-1 mt-1 mb-1 h-[2px] w-6 bg-[repeating-linear-gradient(to_right,#a6a8b8_0_2px,transparent_2px_4px)]" />
            {sideTools.map((name) => (
              <div key={name} className="flex h-[22px] items-center">
                <Tools items={name === "klammer" ? [name, ">"] : [name]} />
              </div>
            ))}
            <button type="button" aria-label="Weitere Schaltflächen" className="flex h-[13px] items-center justify-end rounded-b-md pr-1">
              <svg viewBox="0 0 6 5" className="h-[5px] w-[6px]"><path d="M0 0h1v5H0zM3 0l3 2.500L3 5z" /></svg>
            </button>
          </div>
        </aside>

        <main className="relative grow overflow-hidden border-l border-[#6c6c70] bg-[#ababab]">
          <MdiWindow title="Graph2" className="left-0 top-0">
            <PageButton />
          </MdiWindow>
          <MdiWindow title="Graph4" className="left-[630px] top-0">
            <PageButton />
          </MdiWindow>
          <MdiWindow title="Graph3" className="left-[661px] top-[31px]">
            <PageButton />
          </MdiWindow>
          <BookWindow />
          <MdiWindow title="Graph1" className="left-[693px] top-[62px]">
            <div className="flex min-h-0 grow bg-[#c0c0c0]">
              <div className="relative w-[492px] bg-white">
                <div className="absolute left-0 top-0">
                  <PageButton />
                </div>
                <Plot />
              </div>
            </div>
          </MdiWindow>
        </main>
      </div>
    </div>
  );
}
